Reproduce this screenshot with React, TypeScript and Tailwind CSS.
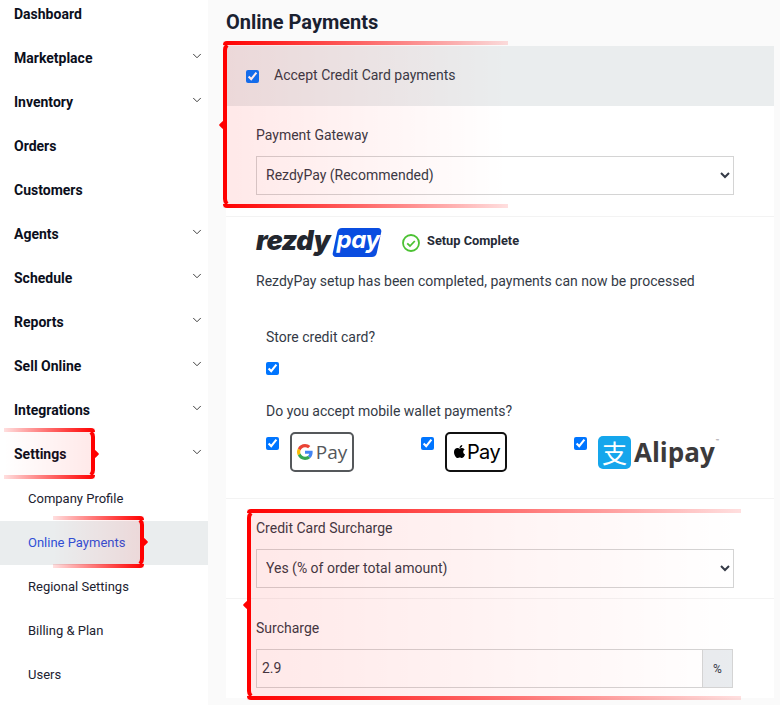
import React from "react";
import { ChevronDown } from "lucide-react";
import { FaApple } from "react-icons/fa";

const font = { fontFamily: "Roboto, sans-serif" };

const NAV: [string, boolean][] = [
  ["Dashboard", false],
  ["Marketplace", true],
  ["Inventory", true],
  ["Orders", false],
  ["Customers", false],
  ["Agents", true],
  ["Schedule", true],
  ["Reports", true],
  ["Sell Online", true],
  ["Integrations", true],
  ["Settings", true],
];

const SUB = ["Company Profile", "Online Payments", "Regional Settings", "Billing & Plan", "Users"];

function NavRow({ label, chevron }: { label: string; chevron: boolean }) {
  return (
    <div className="h-[44px] flex items-center justify-between pl-[14px] pr-[4px] text-[14px] font-bold text-[#0b0f1c]">
      <span>{label}</span>
      {chevron && <ChevronDown size={14} strokeWidth={1.6} className="mb-[4px] text-[#333]" />}
    </div>
  );
}

function Sidebar() {
  return (
    <aside className="w-[208px] shrink-0 bg-white -mt-[8px]">
      {NAV.map(([l, c]) => (
        <NavRow key={l} label={l} chevron={c} />
      ))}
      <div className="mt-[1px]">
        {SUB.map((s) => (
          <div
            key={s}
            className={
              s === "Online Payments"
                ? "h-[44px] flex items-center pl-[28px] text-[13px] text-[#2f4fd6] bg-[#eaedee]"
                : "h-[44px] flex items-center pl-[28px] text-[13px] text-[#1c2230]"
            }
          >
            {s}
          </div>
        ))}
      </div>
    </aside>
  );
}

/* Red brace callout that lies over the content. side = where the brace sits. */
function Callout({ cls, side }: { cls: string; side: "left" | "right" }) {
  const left = side === "left";
  return (
    <div className={"absolute pointer-events-none " + cls}>
      <div
        className={
          left
            ? "absolute inset-0 bg-gradient-to-r from-[#ff000017] to-[#ff000000]"
            : "absolute inset-0 bg-gradient-to-l from-[#ff000017] to-[#ff000000]"
        }
      />
      <div
        className={
          left
            ? "absolute top-0 left-0 right-0 h-[4px] rounded-tl-[8px] bg-gradient-to-r from-[#ff0000] to-[#ff000020]"
            : "absolute top-0 left-0 right-0 h-[4px] rounded-tr-[8px] bg-gradient-to-l from-[#ff0000] to-[#ff000020]"
        }
      />
      <div
        className={
          left
            ? "absolute bottom-0 left-0 right-0 h-[4px] rounded-bl-[8px] bg-gradient-to-r from-[#ff0000] to-[#ff000020]"
            : "absolute bottom-0 left-0 right-0 h-[4px] rounded-br-[8px] bg-gradient-to-l from-[#ff0000] to-[#ff000020]"
        }
      />
      <div
        className={
          left
            ? "absolute top-0 bottom-0 left-0 w-[10px] border-l-[4px] border-t-[4px] border-b-[4px] border-[#ff0000] rounded-l-[9px] [border-top-color:transparent] [border-bottom-color:transparent]"
            : "absolute top-0 bottom-0 right-0 w-[10px] border-r-[4px] border-t-[4px] border-b-[4px] border-[#ff0000] rounded-r-[9px] [border-top-color:transparent] [border-bottom-color:transparent]"
        }
      />
      <div
        className={
          left
            ? "absolute top-1/2 -left-[3px] -mt-[3px] w-[6px] h-[6px] rotate-45 rounded-[1px] bg-[#ff0000]"
            : "absolute top-1/2 -right-[3px] -mt-[3px] w-[6px] h-[6px] rotate-45 rounded-[1px] bg-[#ff0000]"
        }
      />
    </div>
  );
}

function Select({ value }: { value: string }) {
  return (
    <select className="block w-full h-[39px] border border-[#d4d4d4] bg-transparent pl-[5px] pr-[6px] pb-[2px] text-[14px] text-[#343a46] outline-none">
      <option>{value}</option>
    </select>
  );
}

function RezdyLogo() {
  return (
    <div className="flex items-center w-[125px] h-[30px]">
      <span
        className="leading-none font-black italic text-[#23272f] tracking-[-0.5px] -mt-[4px]"
        style={{ fontFamily: "Inter, sans-serif", fontSize: 27 }}
      >
        rezdy
      </span>
      <span className="ml-[5px] h-[29px] w-[44px] flex items-center justify-center rounded-[4px] bg-[#0a4de0] -skew-x-12 shrink-0">
        <span
          className="skew-x-12 text-white italic font-bold text-[24px] leading-none -mt-[6px] tracking-[-0.5px]"
          style={{ fontFamily: "Inter, sans-serif" }}
        >
          pay
        </span>
      </span>
    </div>
  );
}

function GPay() {
  return (
    <div className="w-[64px] h-[40px] rounded-[5px] border-2 border-[#55585b] bg-white flex items-center justify-center gap-[3px]">
      <svg width="16" height="16" viewBox="0 0 48 48">
        <path fill="#EA4335" d="M24 9.5c3.5 0 6.7 1.2 9.2 3.600l6.800-6.800C35.900 2.400 30.500 0 24 0 14.600 0 6.500 5.400 2.600 13.200l7.900 6.100C12.400 13.700 17.700 9.500 24 9.500z" />
        <path fill="#4285F4" d="M46.900 24.500c0-1.600-.1-3.100-.4-4.500H24v9h12.900c-.6 3-2.200 5.500-4.700 7.200l7.600 5.900c4.400-4.100 7.100-10.200 7.100-17.600z" />
        <path fill="#FBBC05" d="M10.500 28.700c-.5-1.500-.8-3-.8-4.700s.3-3.200.8-4.700l-7.900-6.100C1 16.500 0 20.100 0 24s1 7.500 2.600 10.800l7.900-6.100z" />
        <path fill="#34A853" d="M24 48c6.500 0 11.900-2.100 15.900-5.900l-7.600-5.900c-2.100 1.400-4.900 2.300-8.200 2.300-6.300 0-11.600-4.200-13.500-9.800l-7.900 6.100C6.500 42.600 14.600 48 24 48z" />
      </svg>
      <span className="text-[19px] leading-none text-[#55585b]" style={{ fontFamily: "'Open Sans', sans-serif" }}>
        Pay
      </span>
    </div>
  );
}

function APay() {
  return (
    <div className="w-[62px] h-[40px] rounded-[5px] border-2 border-[#111] bg-white flex items-center justify-center">
      <FaApple size={15} className="text-black -mt-[2px]" />
      <span className="text-[20px] leading-none text-black tracking-[-0.6px]" style={{ fontFamily: "Inter, sans-serif" }}>
        Pay
      </span>
    </div>
  );
}

function Alipay() {
  return (
    <div className="flex items-center h-[40px] w-[124px]">
      <div className="w-[33px] h-[33px] rounded-[5px] bg-[#15a6ec] flex items-center justify-center text-white text-[25px] leading-none shrink-0" style={{ fontFamily: "'Noto Sans CJK SC', sans-serif" }}>
        支
      </div>
      <span className="ml-[3px] text-[26px] leading-none font-bold text-[#3c3a3b]" style={{ fontFamily: "'Open Sans', sans-serif" }}>
        Alipay
      </span>
      <span className="self-start mt-[4px] ml-[1px] text-[6px] text-[#777]">™</span>
    </div>
  );
}

export default function App() {
  return (
    <div className="relative flex w-[780px] h-[705px] overflow-hidden bg-[#fafafa]" style={font}>
      <Sidebar />
      <main className="flex-1 pl-[18px] pr-[6px]">
        <h1 className="h-[46px] flex items-center pb-[2px] text-[20px] font-bold text-[#1a2130]">Online Payments</h1>
        <div className="bg-white text-[14px] text-[#343a46]">
          <div className="h-[60px] bg-[#eaedee] flex items-center pl-[20px] gap-[15px]">
            <input type="checkbox" defaultChecked className="w-[13px] h-[13px] m-0" />
            <span className="-mt-[2px]">Accept Credit Card payments</span>
          </div>
          <div className="h-[111px] pl-[30px] pr-[40px] pt-[20px] border-b border-[#f3f3f3]">
            <div className="h-[18px] leading-[18px] mb-[12px]">Payment Gateway</div>
            <Select value="RezdyPay (Recommended)" />
          </div>
          <div className="h-[282px] pl-[30px] pr-[40px] border-b border-[#f3f3f3]">
            <div className="flex items-center pt-[10px] h-[41px]">
              <RezdyLogo />
              <svg width="18" height="18" viewBox="0 0 18 18" className="ml-[21px] mt-[1px]">
                <circle cx="9" cy="9" r="8" fill="none" stroke="#4cc233" strokeWidth="1.8" />
                <path d="M5.200 9.300 8 12l4.800-5" fill="none" stroke="#4cc233" strokeWidth="1.800" />
              </svg>
              <span className="ml-[7px] -mt-[4px] text-[12.8px] font-bold text-[#262b36]">Setup Complete</span>
            </div>
            <p className="mt-[14px] h-[18px] leading-[18px]">RezdyPay setup has been completed, payments can now be processed</p>
            <div className="pl-[10px]">
              <div className="mt-[38px] h-[18px] leading-[18px]">Store credit card?</div>
              <input type="checkbox" defaultChecked className="block w-[13px] h-[13px] m-0 mt-[16px]" />
              <div className="mt-[27px] h-[18px] leading-[18px]">Do you accept mobile wallet payments?</div>
              <div className="flex mt-[12px]">
                <div className="w-[155px] flex gap-[11px]">
                  <input type="checkbox" defaultChecked className="w-[13px] h-[13px] m-0 mt-[5px]" />
                  <GPay />
                </div>
                <div className="w-[153px] flex gap-[11px]">
                  <input type="checkbox" defaultChecked className="w-[13px] h-[13px] m-0 mt-[5px]" />
                  <APay />
                </div>
                <div className="flex gap-[11px]">
                  <input type="checkbox" defaultChecked className="w-[13px] h-[13px] m-0 mt-[5px]" />
                  <Alipay />
                </div>
              </div>
            </div>
          </div>
          <div className="h-[100px] pl-[30px] pr-[40px] pt-[20px] border-b border-[#f3f3f3]">
            <div className="h-[18px] leading-[18px] mb-[12px]">Credit Card Surcharge</div>
            <Select value="Yes (% of order total amount)" />
          </div>
          <div className="h-[99px] pl-[30px] pr-[41px] pt-[20px]">
            <div className="h-[18px] leading-[18px] mb-[12px]">Surcharge</div>
            <div className="flex h-[39px] border border-[#d4d4d4]">
              <div className="flex-1 flex items-center pl-[5px]">2.9</div>
              <div className="w-[30px] bg-[#e9ecef] border-l border-[#d4d4d4] flex items-center justify-center text-[12px]">%</div>
            </div>
          </div>
        </div>
      </main>
      <Callout side="left" cls="left-[223px] top-[41px] w-[285px] h-[167px]" />
      <Callout side="left" cls="left-[247px] top-[509px] w-[494px] h-[191px]" />
      <Callout side="right" cls="left-[4px] top-[428px] w-[91px] h-[51px]" />
      <Callout side="right" cls="left-[53px] top-[516px] w-[91px] h-[52px]" />
    </div>
  );
}
